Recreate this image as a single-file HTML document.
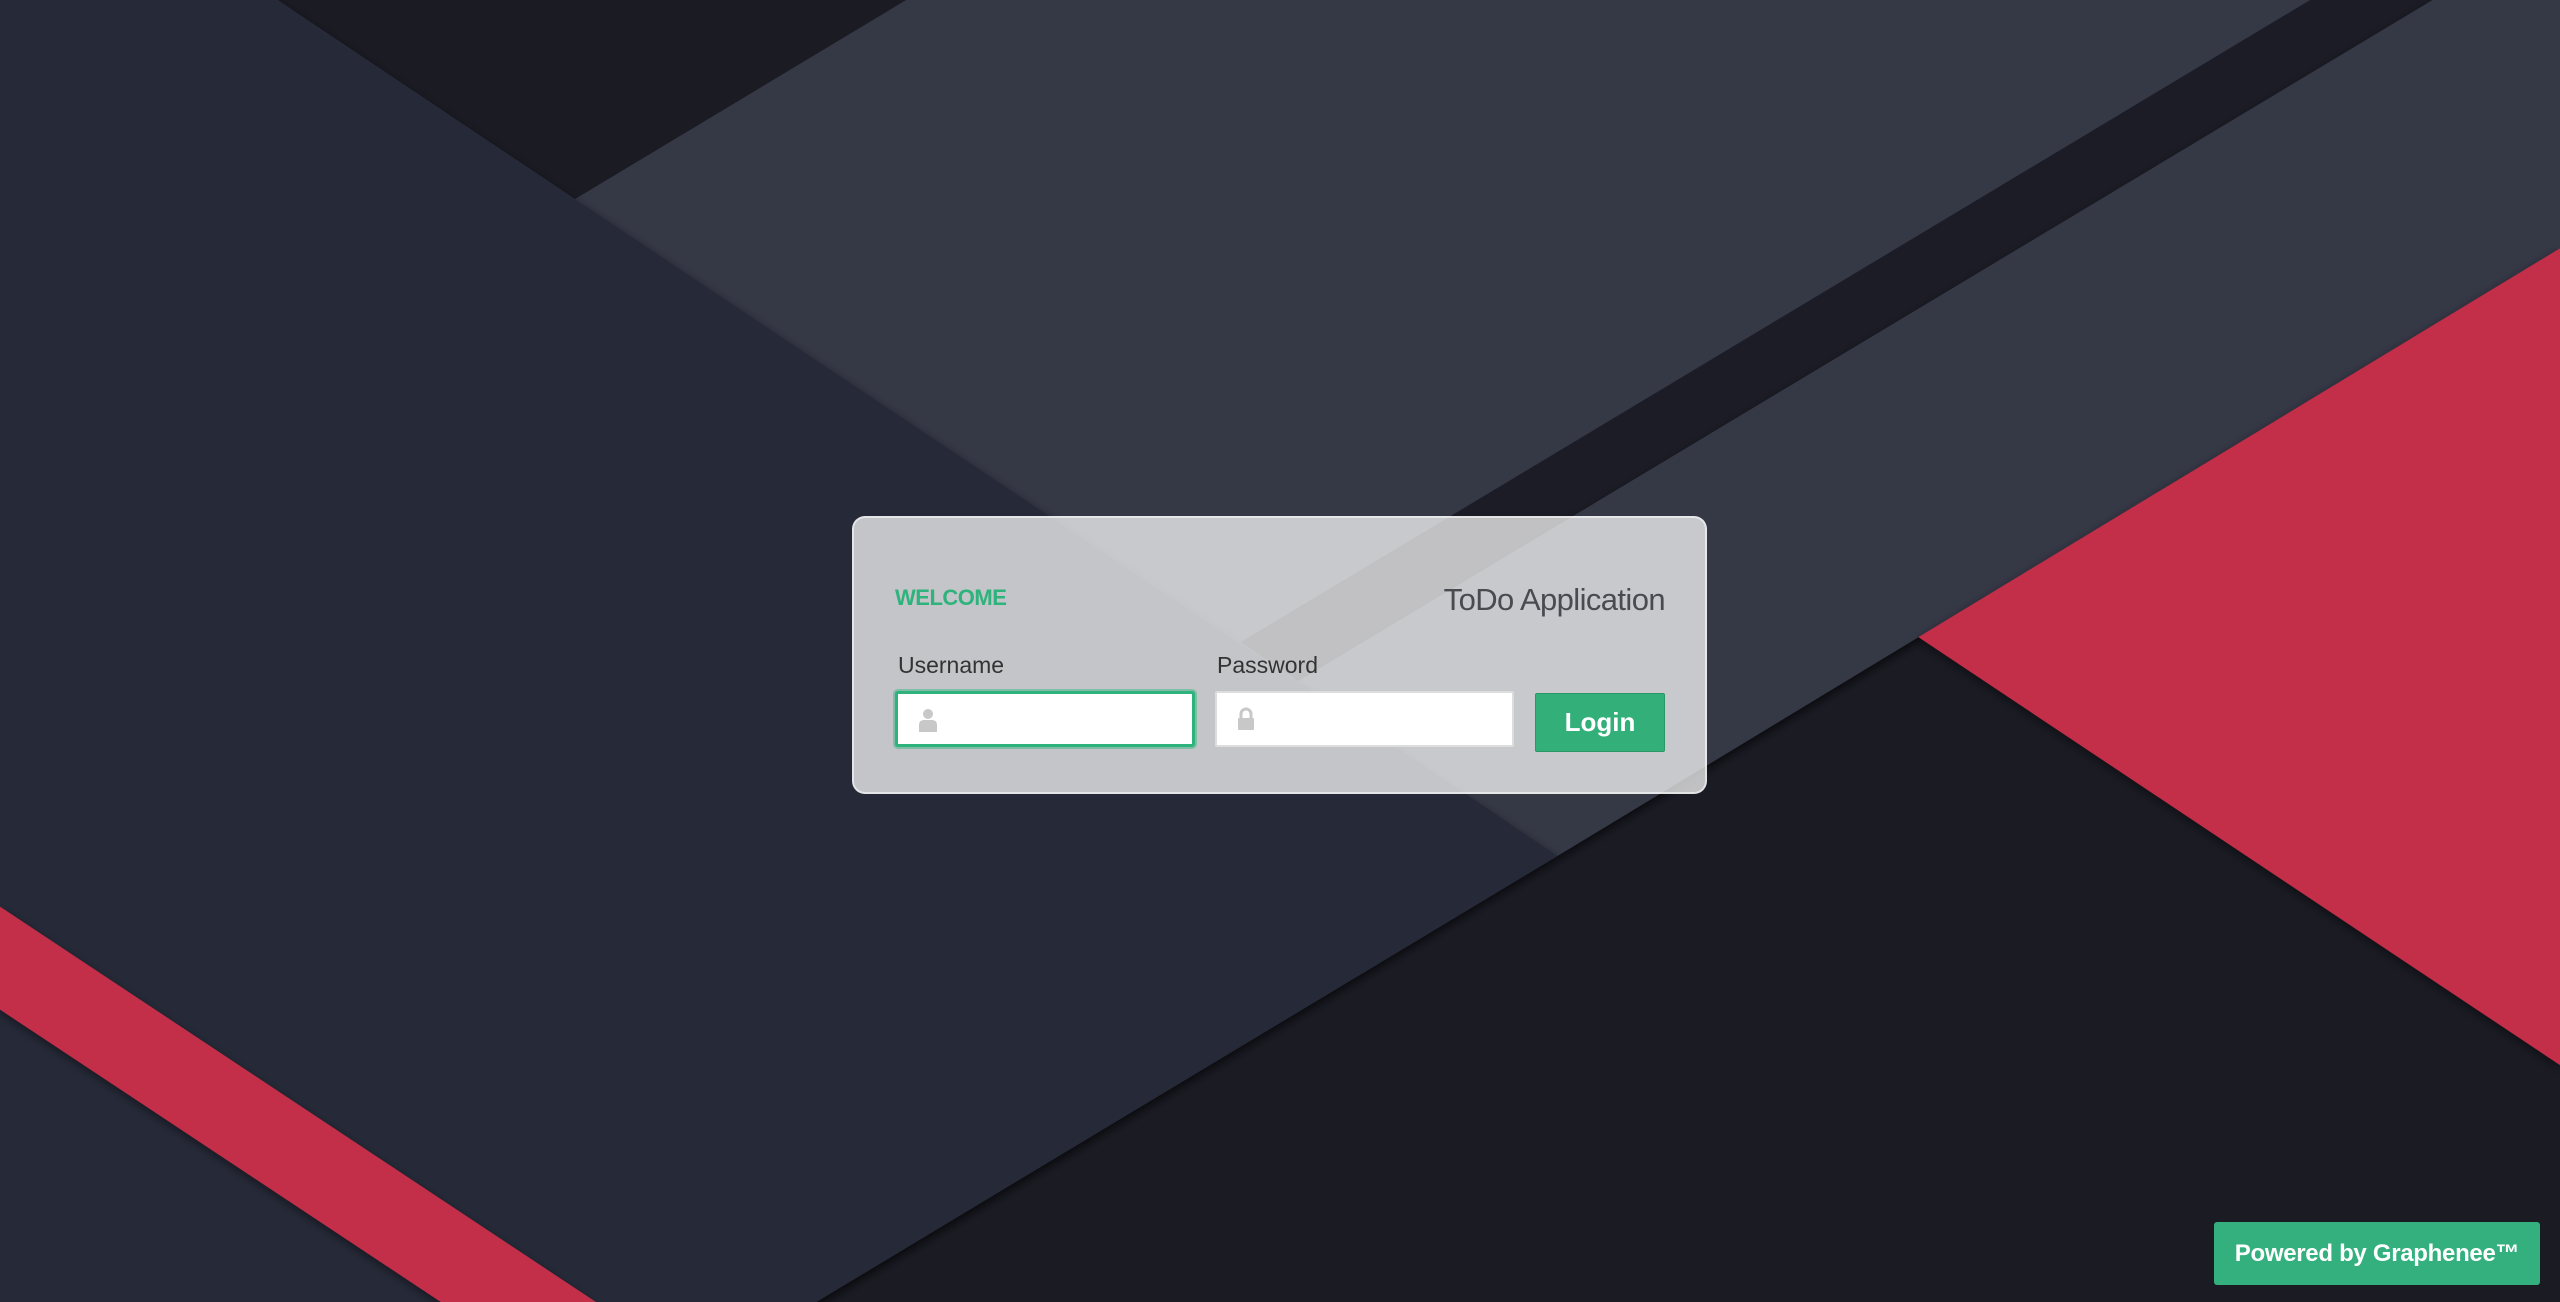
<!DOCTYPE html>
<html><head><meta charset="utf-8"><style>
html,body{margin:0;padding:0;width:2560px;height:1302px;overflow:hidden;background:#1a1b23;font-family:"Liberation Sans",sans-serif}
svg.bg{position:absolute;left:0;top:0}
.card{position:absolute;left:852px;top:516px;width:851px;height:274px;border:2px solid rgba(255,255,255,0.55);border-radius:13px;background:rgba(255,255,255,0.73)}
.welcome{position:absolute;left:41px;top:67px;font-size:22px;font-weight:bold;color:#2fb37c;letter-spacing:-0.5px}
.title{position:absolute;right:40px;top:64px;font-size:31px;color:#4a4b50;letter-spacing:-0.6px}
.lbl{position:absolute;top:134px;font-size:23px;color:#333}
.inp{position:absolute;top:173px;height:56px;background:#fff;box-sizing:border-box}
.u{left:41px;width:300px;border:3px solid #2fb37c;box-shadow:0 0 0 2px rgba(47,179,124,0.45);border-radius:3px}
.p{left:361px;width:299px;border:2px solid #ddd;border-radius:2px}
.btn{position:absolute;left:681px;top:175px;width:130px;height:59px;background:#33b07a;border:1px solid #2a9767;box-sizing:border-box;border-radius:2px;color:#fff;font-weight:bold;font-size:26px;text-align:center;line-height:57px}
.badge{position:absolute;left:2214px;top:1222px;width:326px;height:63px;background:#33b07d;border-radius:3px;color:#fff;font-size:24px;font-weight:bold;text-align:center;line-height:63px;letter-spacing:-0.3px}
</style></head><body>
<svg class="bg" width="2560" height="1302" viewBox="0 0 1568 797" preserveAspectRatio="none">
<defs><filter id="sh" x="-10%" y="-10%" width="120%" height="120%"><feDropShadow dx="0" dy="2" stdDeviation="3" flood-color="#000" flood-opacity="0.45"/></filter></defs>
<rect width="1568" height="797" fill="#1a1b23"/>
<polygon points="0,0 1568,0 1568,152 500,797 0,797" fill="#343845" filter="url(#sh)"/>
<polygon points="1415,0 1490,0 795,417 760,393" fill="#1b1c25"/>
<polygon points="1490,0 1568,0 1568,152 954,524 795,417" fill="#343845" filter="url(#sh)"/>
<polygon points="170,0 555,0 352,122" fill="#1a1b23"/>
<polygon points="0,0 170,0 954,524 500,797 0,797" fill="#282c38" filter="url(#sh)"/>
<polygon points="1568,152 1175,390 1568,652" fill="#c32d4a" filter="url(#sh)"/>
<polygon points="0,555 365,797 270,797 0,618" fill="#c32d4a" filter="url(#sh)"/>
</svg>
<div class="card">
<div class="welcome">WELCOME</div>
<div class="title">ToDo Application</div>
<div class="lbl" style="left:44px">Username</div>
<div class="lbl" style="left:363px">Password</div>
<div class="inp u"><svg style="position:absolute;left:20px;top:14px" width="20" height="24" viewBox="0 0 20 24"><circle cx="10" cy="6" r="5" fill="#c8c8c8"/><path d="M1 24 V17 Q1 12 6 12 H14 Q19 12 19 17 V24Z" fill="#c8c8c8"/></svg></div>
<div class="inp p"><svg style="position:absolute;left:20px;top:14px" width="18" height="24" viewBox="0 0 18 24"><path d="M4 11 V7 A5 5 0 0 1 14 7 V11" stroke="#c8c8c8" stroke-width="3" fill="none"/><rect x="1" y="11" width="16" height="12" rx="1" fill="#c8c8c8"/></svg></div>
<div class="btn">Login</div>
</div>
<div class="badge">Powered by Graphenee™</div>
</body></html>
